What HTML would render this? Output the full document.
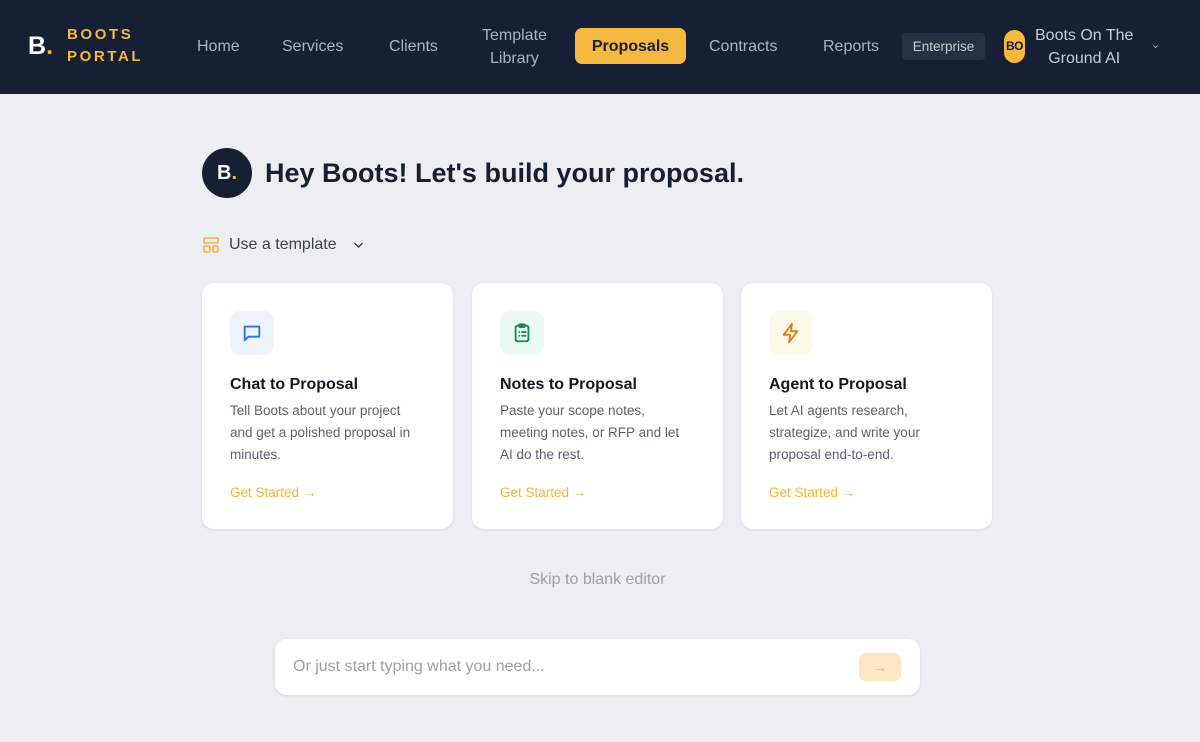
<!DOCTYPE html>
<html><head><meta charset="utf-8"><style>
*{box-sizing:border-box;margin:0;padding:0}
body{width:1200px;height:742px;background:#edeef2;font-family:"Liberation Sans",sans-serif;position:relative;overflow:hidden}
.nav{position:absolute;left:0;top:0;width:1200px;height:94px;background:#161f33}
.a{position:absolute;white-space:nowrap}
.ni{color:#aab3c2;font-size:16px;text-align:center;line-height:23px}
.card{position:absolute;top:283px;width:251px;height:246px;background:#fff;border-radius:12px;box-shadow:0 1px 3px rgba(0,0,0,.08)}
.ib{position:absolute;left:28px;top:28px;width:44px;height:44px;border-radius:10px;display:flex;align-items:center;justify-content:center}
.ct{position:absolute;left:28px;top:93px;font-size:16px;font-weight:bold;color:#111827}
.cd{position:absolute;left:28px;top:117px;font-size:13.5px;line-height:22px;color:#5b6270;width:192px;white-space:normal}
.gs{position:absolute;left:28px;top:202px;font-size:13.5px;color:#f2b53b}
</style></head><body>
<div class="nav">
<div class="a" style="left:28px;top:32px;color:#fff;font-size:25px;font-weight:bold">B<span style="color:#f4b940">.</span></div>
<div class="a" style="left:67px;top:24px;color:#f4b940;font-size:15px;font-weight:bold;letter-spacing:2.6px;line-height:22px">BOOTS<br>PORTAL</div>
<div class="a ni" style="left:197px;top:35px">Home</div>
<div class="a ni" style="left:282px;top:35px">Services</div>
<div class="a ni" style="left:389px;top:35px">Clients</div>
<div class="a ni" style="left:482px;top:24px">Template<br>Library</div>
<div class="a" style="left:575px;top:28px;width:111px;height:36px;background:#f5b942;border-radius:7px;color:#161f33;font-size:16px;font-weight:bold;text-align:center;line-height:37px">Proposals</div>
<div class="a ni" style="left:709px;top:35px">Contracts</div>
<div class="a ni" style="left:823px;top:35px">Reports</div>
<div class="a" style="left:902px;top:33px;width:83px;height:27px;background:#283142;border-radius:4px;color:#c6ccd6;font-size:13.5px;text-align:center;line-height:27px">Enterprise</div>
<div class="a" style="left:1004px;top:30px;width:21px;height:33px;background:#f5b942;border-radius:11px;color:#161f33;font-size:12px;font-weight:bold;text-align:center;line-height:33px;letter-spacing:-.5px">BO</div>
<div class="a ni" style="left:1035px;top:24px;color:#c6ccd6">Boots On The<br>Ground AI</div>
<div class="a" style="left:1151px;top:38px;color:#aab3c2;font-size:11px">&#8964;</div>
</div>
<div class="a" style="left:202px;top:148px;width:50px;height:50px;border-radius:50%;background:#161f33;color:#fff;font-size:20px;font-weight:bold;text-align:center;line-height:50px">B<span style="color:#f4b940">.</span></div>
<div class="a" style="left:265px;top:158px;font-size:27px;font-weight:bold;color:#161f2f">Hey Boots! Let's build your proposal.</div>
<svg class="a" style="left:203px;top:237px" width="16" height="16" viewBox="0 0 16 16" fill="none" stroke="#f2b53b" stroke-width="1.6"><rect x="1" y="1" width="14" height="5" rx="1"/><rect x="1" y="9" width="6" height="6" rx="1"/><rect x="10" y="9" width="5" height="6" rx="1"/></svg>
<div class="a" style="left:229px;top:236px;font-size:16px;color:#374151">Use a template</div>
<svg class="a" style="left:353px;top:241px" width="11" height="8" viewBox="0 0 11 8" fill="none" stroke="#374151" stroke-width="1.4"><path d="M1.5 2l4 4 4-4"/></svg>

<div class="card" style="left:202px"><div class="ib" style="background:#eef4fe"><svg width="22" height="22" viewBox="0 0 24 24" fill="none" stroke="#2f6fe0" stroke-width="2" stroke-linejoin="round"><path d="M4 5h16v11H8l-4 4z"/></svg></div>
<div class="ct">Chat to Proposal</div><div class="cd">Tell Boots about your project and get a polished proposal in minutes.</div><div class="gs">Get Started →</div></div>
<div class="card" style="left:472px"><div class="ib" style="background:#ebfbf2"><svg width="22" height="22" viewBox="0 0 24 24" fill="none" stroke="#14895a" stroke-width="2" stroke-linecap="round"><rect x="5" y="4" width="14" height="17" rx="2"/><rect x="9" y="2.5" width="6" height="3" rx="1"/><path d="M9 11h.01M12 11h4M9 15h.01M12 15h4"/></svg></div>
<div class="ct">Notes to Proposal</div><div class="cd">Paste your scope notes, meeting notes, or RFP and let AI do the rest.</div><div class="gs">Get Started →</div></div>
<div class="card" style="left:741px"><div class="ib" style="background:#fef9e8"><svg width="22" height="22" viewBox="0 0 24 24" fill="none" stroke="#e07d12" stroke-width="2" stroke-linejoin="round"><path d="M13 2L4 14h7l-1 8 9-12h-7z"/></svg></div>
<div class="ct">Agent to Proposal</div><div class="cd">Let AI agents research, strategize, and write your proposal end-to-end.</div><div class="gs">Get Started →</div></div>

<div class="a" style="left:0;width:1195px;text-align:center;top:571px;font-size:16px;color:#9aa1ad">Skip to blank editor</div>
<div class="a" style="left:275px;top:639px;width:645px;height:56px;background:#fff;border-radius:12px;box-shadow:0 1px 3px rgba(0,0,0,.1)">
<div class="a" style="left:18px;top:19px;font-size:16px;color:#9aa1ad">Or just start typing what you need...</div>
<div class="a" style="left:584px;top:14px;width:42px;height:28px;background:#fde7c4;border-radius:7px;color:#e8b56a;text-align:center;line-height:28px;font-size:14px">→</div>
</div>
</body></html>
